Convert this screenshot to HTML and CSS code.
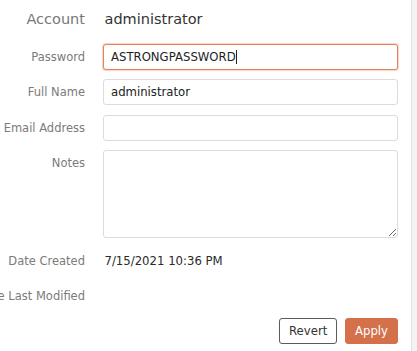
FILE: index.html
```html
<!DOCTYPE html>
<html>
<head>
<meta charset="utf-8">
<link rel="stylesheet" href="styles.css">
</head>
<body>
<div class="panel">
  <form class="form">
    <div class="label label-lg">Account</div>
    <div class="value value-lg">administrator</div>

    <div class="label">Password</div>
    <div class="field focused"><span>ASTRONGPASSWORD</span><span class="caret"></span></div>

    <div class="label">Full Name</div>
    <input class="field" type="text" value="administrator">

    <div class="label">Email Address</div>
    <input class="field" type="text" value="">

    <div class="label">Notes</div>
    <textarea class="field notes"></textarea>

    <div class="label">Date Created</div>
    <div class="value">7/15/2021 10:36 PM</div>

    <div class="label">Date Last Modified</div>
    <div class="value"></div>

    <div class="actions">
      <button type="button" class="btn btn-revert">Revert</button>
      <button type="button" class="btn btn-apply">Apply</button>
    </div>
  </form>
  <div class="edge"></div>
</div>
</body>
</html>
```

FILE: styles.css
```css
html, body {
  margin: 0;
  padding: 0;
  background: #fff;
  font-family: "DejaVu Sans", Verdana, sans-serif;
}

.panel {
  display: flex;
  width: 417px;
  height: 351px;
  overflow: hidden;
}

.form {
  flex: 1;
  display: grid;
  grid-template-columns: 85px 295px;
  grid-template-rows: 28.6px 26px 26px 26px 88px 26px 26px 26px;
  column-gap: 18px;
  row-gap: 9.4px;
  padding-top: 6px;
  align-content: start;
}

.label {
  justify-self: end;
  white-space: nowrap;
  line-height: 26px;
  font-size: 11.5px;
  color: #7b7b7b;
  direction: rtl;
  unicode-bidi: plaintext;
}

.label-lg {
  font-size: 14.5px;
  color: #777;
}

.value {
  line-height: 26px;
  font-size: 11.7px;
  color: #2a2a2a;
  padding-left: 1.5px;
}

.value-lg {
  font-size: 14.5px;
  color: #333;
}

.field {
  box-sizing: border-box;
  height: 26px;
  width: 295px;
  margin: 0;
  border: 1px solid #dcdcdc;
  border-radius: 3px;
  background: #fff;
  padding: 0 7px;
  font-family: "DejaVu Sans", Verdana, sans-serif;
  font-size: 11.7px;
  color: #222;
  outline: none;
}

div.field {
  display: flex;
  align-items: center;
}

.focused {
  border-color: #df845b;
  box-shadow: 0 0 1px 0.5px rgba(223, 132, 91, 0.35);
  color: #1e1e1e;
}

.caret {
  display: inline-block;
  width: 1px;
  height: 14px;
  background: #222;
  margin-left: 0.5px;
}

.notes {
  height: 88px;
  resize: both;
  display: block;
}

.actions {
  grid-column: 1 / 3;
  display: flex;
  justify-content: flex-end;
  gap: 8px;
}

.btn {
  box-sizing: border-box;
  height: 26px;
  border-radius: 3px;
  font-family: "DejaVu Sans", Verdana, sans-serif;
  font-size: 11.7px;
  padding: 0 9px;
  cursor: pointer;
}

.btn-revert {
  background: #fff;
  border: 1px solid #5a5a5a;
  color: #333;
  width: 58px;
}

.btn-apply {
  background: #d4704a;
  border: 1px solid #d4704a;
  color: #fff;
  width: 53px;
}

.edge {
  width: 5px;
  margin-left: auto;
  border-left: 1px solid #e2e2e2;
  background: #f3f3f3;
}
```
